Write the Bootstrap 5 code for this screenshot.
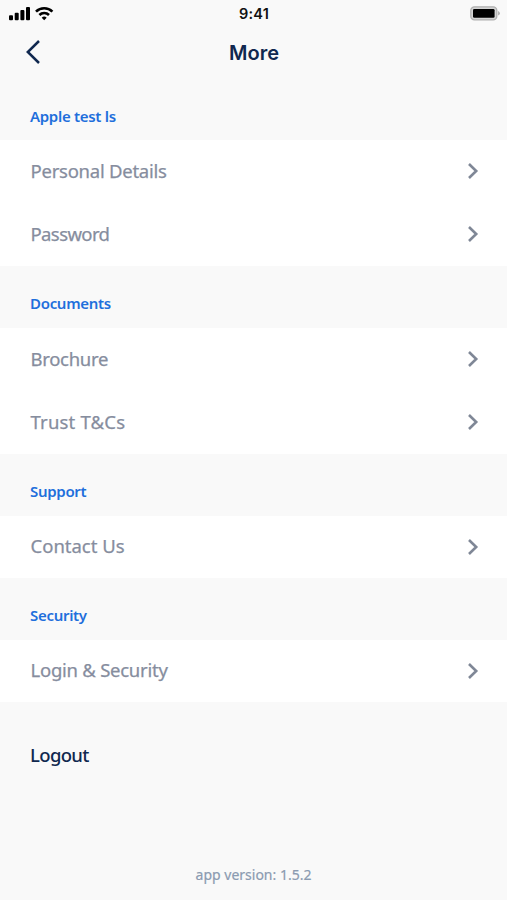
<!DOCTYPE html>
<html lang="en">
<head>
<meta charset="utf-8">
<meta name="viewport" content="width=device-width, initial-scale=1">
<title>More</title>
<link href="https://cdn.jsdelivr.net/npm/bootstrap@5.3.0/dist/css/bootstrap.min.css" rel="stylesheet">
<style>
body{background:#f9f9f9;font-family:"Noto Sans",sans-serif;color:#10284f;height:900px;overflow:hidden}
svg{display:block}
.status-bar{height:27px;padding:0 7px 0 8px}
.clock{font:600 14.5px/27px Inter,sans-serif;color:#111;letter-spacing:.2px}
.side{width:60px}
.title-bar{height:50px;padding:0 24px 0 25px}
.screen-title{font:600 20px/50px Inter,sans-serif;color:#10284f;padding-top:1px}
.section-title{height:62px;padding:12px 30px 0;font-size:15px;font-weight:600;color:#1f6fdc;line-height:20px;letter-spacing:-.3px}
header + main .section-title:first-child{height:63px;padding-top:14px}
.menu-row{height:63px;padding:0 28.5px 2px 30.5px;font-size:18.5px;font-weight:450;color:#868d9e;background:#fff;line-height:24px;border:0;-webkit-text-stroke:.25px #868d9e}
.menu-row svg{margin-top:1px}
.menu-row.single{height:62px}
.logout{padding:0 30px;margin-top:41px;font-size:18.5px;font-weight:500;line-height:24px;color:#10284f;letter-spacing:-.65px}
.version{font-size:14px;font-weight:450;color:#8b9bb1;line-height:20px;padding-bottom:15px;-webkit-text-stroke:.2px #8b9bb1}
#r1{letter-spacing:-.25px}
#r2{letter-spacing:-.6px}
#r3{letter-spacing:-.3px}
#r4{letter-spacing:.2px}
#r6{letter-spacing:-.25px}
</style>
<script src="https://cdn.jsdelivr.net/npm/bootstrap@5.3.0/dist/js/bootstrap.bundle.min.js"></script>
</head>
<body class="d-flex flex-column m-0">
<svg width="0" height="0" class="position-absolute"><symbol id="chev" viewBox="0 0 12 18"><path d="M2 2l7.2 7L2 16" fill="none" stroke="#7f8796" stroke-width="2.6"/></symbol></svg>
<header>
  <div class="status-bar d-flex justify-content-between align-items-center">
    <div class="side d-flex">
      <svg width="48" height="16" viewBox="0 0 48 16" fill="#000"><rect x="1" y="9.3" width="4" height="5" rx="1"/><rect x="6.7" y="6.8" width="4" height="7.5" rx="1"/><rect x="12.4" y="4" width="4" height="10.3" rx="1"/><rect x="18" y="1" width="4" height="13.3" rx="1"/><g fill="none" stroke="#000" stroke-width="2.6"><path d="M28 5.6a11.6 11.6 0 0 1 16.4 0"/><path d="M31.4 9a6.8 6.8 0 0 1 9.6 0"/></g><path d="M36.2 14.2l-2.5-2.5a3.6 3.6 0 0 1 5 0z"/></svg>
    </div>
    <div class="clock">9:41</div>
    <div class="side d-flex justify-content-end">
      <svg width="30" height="15" viewBox="0 0 30 15"><rect x=".8" y=".8" width="26" height="13" rx="3.6" fill="#d4d4d4" stroke="#b0b0b0" stroke-width="1.3"/><rect x="3" y="3" width="21.6" height="8.8" rx="1.3" fill="#000"/><path d="M28.1 5v4.6q1.7-.7 1.7-2.3T28.1 5z" fill="#aaa"/></svg>
    </div>
  </div>
  <nav class="title-bar d-flex justify-content-between align-items-center">
    <svg width="20" height="26" viewBox="0 0 20 26"><path d="M14 2L2.8 13 14 24" fill="none" stroke="#10284f" stroke-width="2.5"/></svg>
    <h1 class="screen-title m-0">More</h1>
    <svg width="20" height="26" aria-hidden="true"></svg>
  </nav>
</header>
<main>
  <h2 class="section-title d-flex align-items-center m-0"><span id="h1">Apple test ls</span></h2>
  <div class="list-group list-group-flush">
    <a class="menu-row d-flex justify-content-between align-items-center text-decoration-none"><span id="r1">Personal Details</span><svg width="12" height="18"><use href="#chev"/></svg></a>
    <a class="menu-row d-flex justify-content-between align-items-center text-decoration-none"><span id="r2">Password</span><svg width="12" height="18"><use href="#chev"/></svg></a>
  </div>
  <h2 class="section-title d-flex align-items-center m-0"><span id="h2">Documents</span></h2>
  <div class="list-group list-group-flush">
    <a class="menu-row d-flex justify-content-between align-items-center text-decoration-none"><span id="r3">Brochure</span><svg width="12" height="18"><use href="#chev"/></svg></a>
    <a class="menu-row d-flex justify-content-between align-items-center text-decoration-none"><span id="r4">Trust T&amp;Cs</span><svg width="12" height="18"><use href="#chev"/></svg></a>
  </div>
  <h2 class="section-title d-flex align-items-center m-0"><span id="h3">Support</span></h2>
  <a class="menu-row single d-flex justify-content-between align-items-center text-decoration-none"><span id="r5">Contact Us</span><svg width="12" height="18"><use href="#chev"/></svg></a>
  <h2 class="section-title d-flex align-items-center m-0"><span id="h4">Security</span></h2>
  <a class="menu-row single d-flex justify-content-between align-items-center text-decoration-none"><span id="r6">Login &amp; Security</span><svg width="12" height="18"><use href="#chev"/></svg></a>
  <div class="logout"><span id="r7">Logout</span></div>
</main>
<footer class="version text-center mt-auto"><span id="v1">app version: 1.5.2</span></footer>
</body>
</html>
